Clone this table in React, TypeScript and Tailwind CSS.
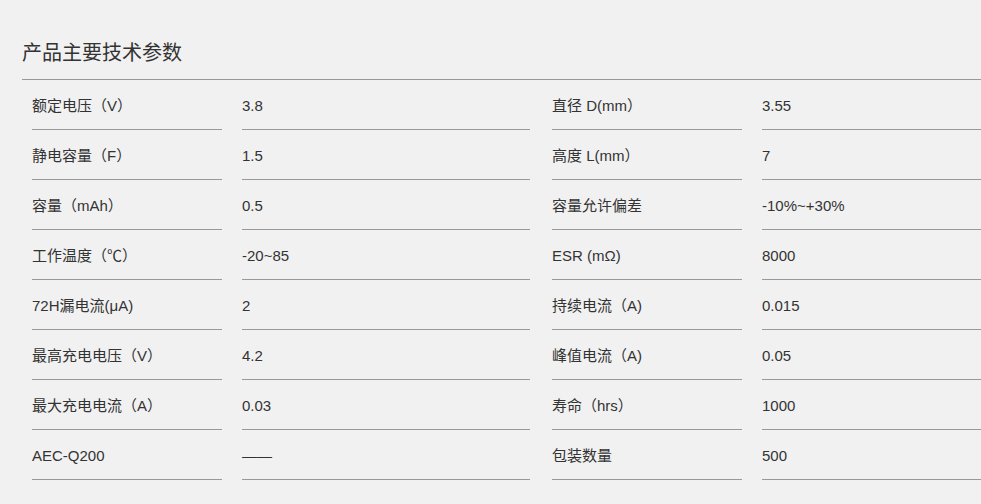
const rows: [string, string, string, string][] = [
  ["额定电压（V）", "3.8", "直径 D(mm）", "3.55"],
  ["静电容量（F）", "1.5", "高度 L(mm）", "7"],
  ["容量（mAh）", "0.5", "容量允许偏差", "-10%~+30%"],
  ["工作温度（℃）", "-20~85", "ESR (mΩ)", "8000"],
  ["72H漏电流(μA)", "2", "持续电流（A)", "0.015"],
  ["最高充电电压（V）", "4.2", "峰值电流（A)", "0.05"],
  ["最大充电电流（A）", "0.03", "寿命（hrs）", "1000"],
  ["AEC-Q200", "——", "包装数量", "500"],
];

function Cell({ text, w }: { text: string; w: string }) {
  return (
    <div className={`${w} h-[50px] shrink-0 flex items-center pt-[3px] border-b border-[#999] text-[15px] text-[#333]`}>
      {text}
    </div>
  );
}

export default function App() {
  return (
    <div
      className="w-full h-[504px] overflow-hidden bg-[#f1f1f1]"
      style={{ fontFamily: '"Liberation Sans", "Noto Sans CJK SC", sans-serif' }}
    >
      <div className="w-[1100px] pl-[22px] pt-[30px]">
        <div className="h-[50px] flex items-center pb-[4px] border-b border-[#999] text-[20px] text-[#333]">
          产品主要技术参数
        </div>
        <div className="pl-[10px]">
          {rows.map((r, i) => (
            <div key={i} className="flex">
              <Cell text={r[0]} w="w-[190px]" />
              <div className="w-[20px] shrink-0" />
              <Cell text={r[1]} w="w-[288px]" />
              <div className="w-[22px] shrink-0" />
              <Cell text={r[2]} w="w-[190px]" />
              <div className="w-[20px] shrink-0" />
              <Cell text={r[3]} w="w-[288px]" />
            </div>
          ))}
        </div>
      </div>
    </div>
  );
}
